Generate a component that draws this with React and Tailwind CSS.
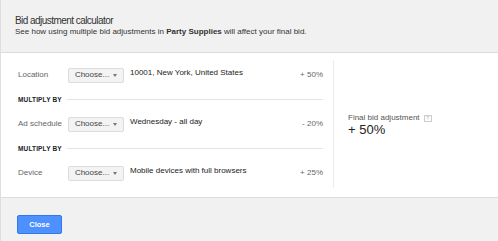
const ROWS = [
  { label: 'Location', value: '10001, New York, United States', pct: '+ 50%' },
  { label: 'Ad schedule', value: 'Wednesday - all day', pct: '- 20%' },
  { label: 'Device', value: 'Mobile devices with full browsers', pct: '+ 25%' },
]

function ChooseButton() {
  return (
    <div className="flex-none flex items-center justify-center gap-[4px] w-[56px] h-[15px] rounded-[2px] border border-[#dcdcdc] bg-[#f3f3f3] text-[8px] text-[#444]">
      <span>Choose...</span>
      <span className="w-0 h-0 border-l-[2.5px] border-r-[2.5px] border-t-[3px] border-l-transparent border-r-transparent border-t-[#777]" />
    </div>
  )
}

function MultiplyBy() {
  return (
    <div className="flex items-center h-[19px] gap-[5px]">
      <span className="text-[6.5px] font-bold text-[#222] tracking-[0.15px] whitespace-nowrap">MULTIPLY BY</span>
      <div className="flex-1 h-px bg-[#e2e2e2]" />
    </div>
  )
}

function Row({ row }) {
  return (
    <div className="flex items-center h-[30px]">
      <span className="flex-none w-[50px] text-[8px] text-[#666] whitespace-nowrap">{row.label}</span>
      <ChooseButton />
      <span className="ml-[6px] mb-[4px] flex-1 text-[8px] text-[#222] whitespace-nowrap">{row.value}</span>
      <span className="text-[8px] text-[#666] whitespace-nowrap">{row.pct}</span>
    </div>
  )
}

export default function App() {
  return (
    <div className="w-[498px] h-[241px] flex flex-col border-l border-[#dedede] bg-[#f1f1f1] font-['Liberation_Sans',Arial,sans-serif]">
      <div className="flex-none h-[53px] border-b border-[#dcdcdc] pl-[14px] pt-[15px]">
        <div className="text-[10px] leading-[11px] tracking-[-0.55px] text-[#333]">Bid adjustment calculator</div>
        <div className="mt-[1px] text-[8px] leading-[10px] text-[#333]">
          See how using multiple bid adjustments in <b>Party Supplies</b> will affect your final bid.
        </div>
      </div>

      <div className="flex-none h-[145px] bg-white flex pt-[7px] border-b border-[#dcdcdc]">
        <div className="w-[322px] pl-[17px] flex flex-col h-[128px]">
          <Row row={ROWS[0]} />
          <MultiplyBy />
          <Row row={ROWS[1]} />
          <MultiplyBy />
          <Row row={ROWS[2]} />
        </div>
        <div className="ml-[10px] w-px h-[128px] bg-[#ebebeb]" />
        <div className="flex-1 h-[128px] flex flex-col justify-center pl-[14px] pt-[2px]">
          <div className="flex items-center gap-[4px] text-[8px] leading-[10px] text-[#555]">
            <span>Final bid adjustment</span>
            <span className="w-[8px] h-[7px] border border-[#ccc] text-[5px] leading-[5px] text-[#aaa] flex items-center justify-center">?</span>
          </div>
          <div className="text-[13px] leading-[14px] text-[#222]">+ 50%</div>
        </div>
      </div>

      <div className="flex-1 pl-[16px] pt-[12px]">
        <button className="w-[45px] h-[19px] rounded-[2px] border border-[#3079ed] bg-[#4d90fe] text-white text-[7.5px] font-bold">
          Close
        </button>
      </div>
    </div>
  )
}
